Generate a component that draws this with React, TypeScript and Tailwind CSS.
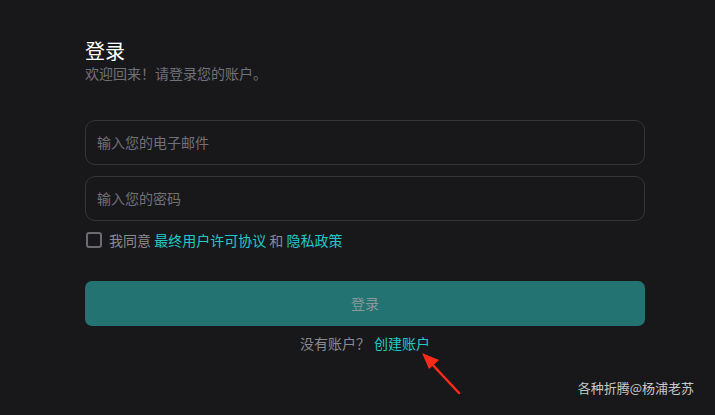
const font = "font-['Noto_Sans_CJK_SC','Noto_Sans',sans-serif]";

const App = () => {
    return (
        <div className={`relative w-[715px] h-[415px] bg-[#18181b] overflow-hidden ${font}`}>
            <div className="w-[560px] ml-[85px] pt-[38px] flex flex-col">
                <h1 className="text-[20px] leading-[26px] text-white">登录</h1>
                <p className="text-[14px] leading-[18px] text-[#71717a]">欢迎回来！请登录您的账户。</p>

                <div className="mt-[38px] flex flex-col gap-[11px]">
                    <div className="h-[45px] rounded-[10px] border border-[#34343a] flex items-center px-[11px]">
                        <span className="text-[14px] text-[#71717a]">输入您的电子邮件</span>
                    </div>
                    <div className="h-[45px] rounded-[10px] border border-[#34343a] flex items-center px-[11px]">
                        <span className="text-[14px] text-[#71717a]">输入您的密码</span>
                    </div>
                </div>

                <div className="mt-[10px] flex items-center gap-[7px] text-[14px] leading-[18px]">
                    <span className="ml-px w-[16px] h-[16px] rounded-[3px] border-2 border-[#6b6b72]"></span>
                    <span className="text-[#8a8a90]">
                        我同意 <span className="text-[#22c9c9]">最终用户许可协议</span> 和 <span className="text-[#22c9c9]">隐私政策</span>
                    </span>
                </div>

                <div className="mt-[32px] h-[45px] rounded-[7px] bg-[#237373] flex items-center justify-center">
                    <span className="text-[14px] text-[#8a9a9a]">登录</span>
                </div>

                <div className="mt-[8px] flex justify-center gap-[4px] text-[14px] leading-[18px]">
                    <span className="text-[#8a8a90]">没有账户？</span>
                    <span className="text-[#22c9c9]">创建账户</span>
                </div>
            </div>

            <svg className="absolute left-0 top-0" width="715" height="415">
                <line x1="459" y1="393" x2="430" y2="362" stroke="#ff2a1a" strokeWidth="2.5" strokeLinecap="round" />
                <polygon points="422,353 439,360 429,369" fill="#ff2a1a" />
            </svg>

            <span className="absolute right-[21px] top-[378px] text-[13px] leading-[20px] text-[#c8c8c8]">各种折腾@杨浦老苏</span>
        </div>
    );
};

export default App;
